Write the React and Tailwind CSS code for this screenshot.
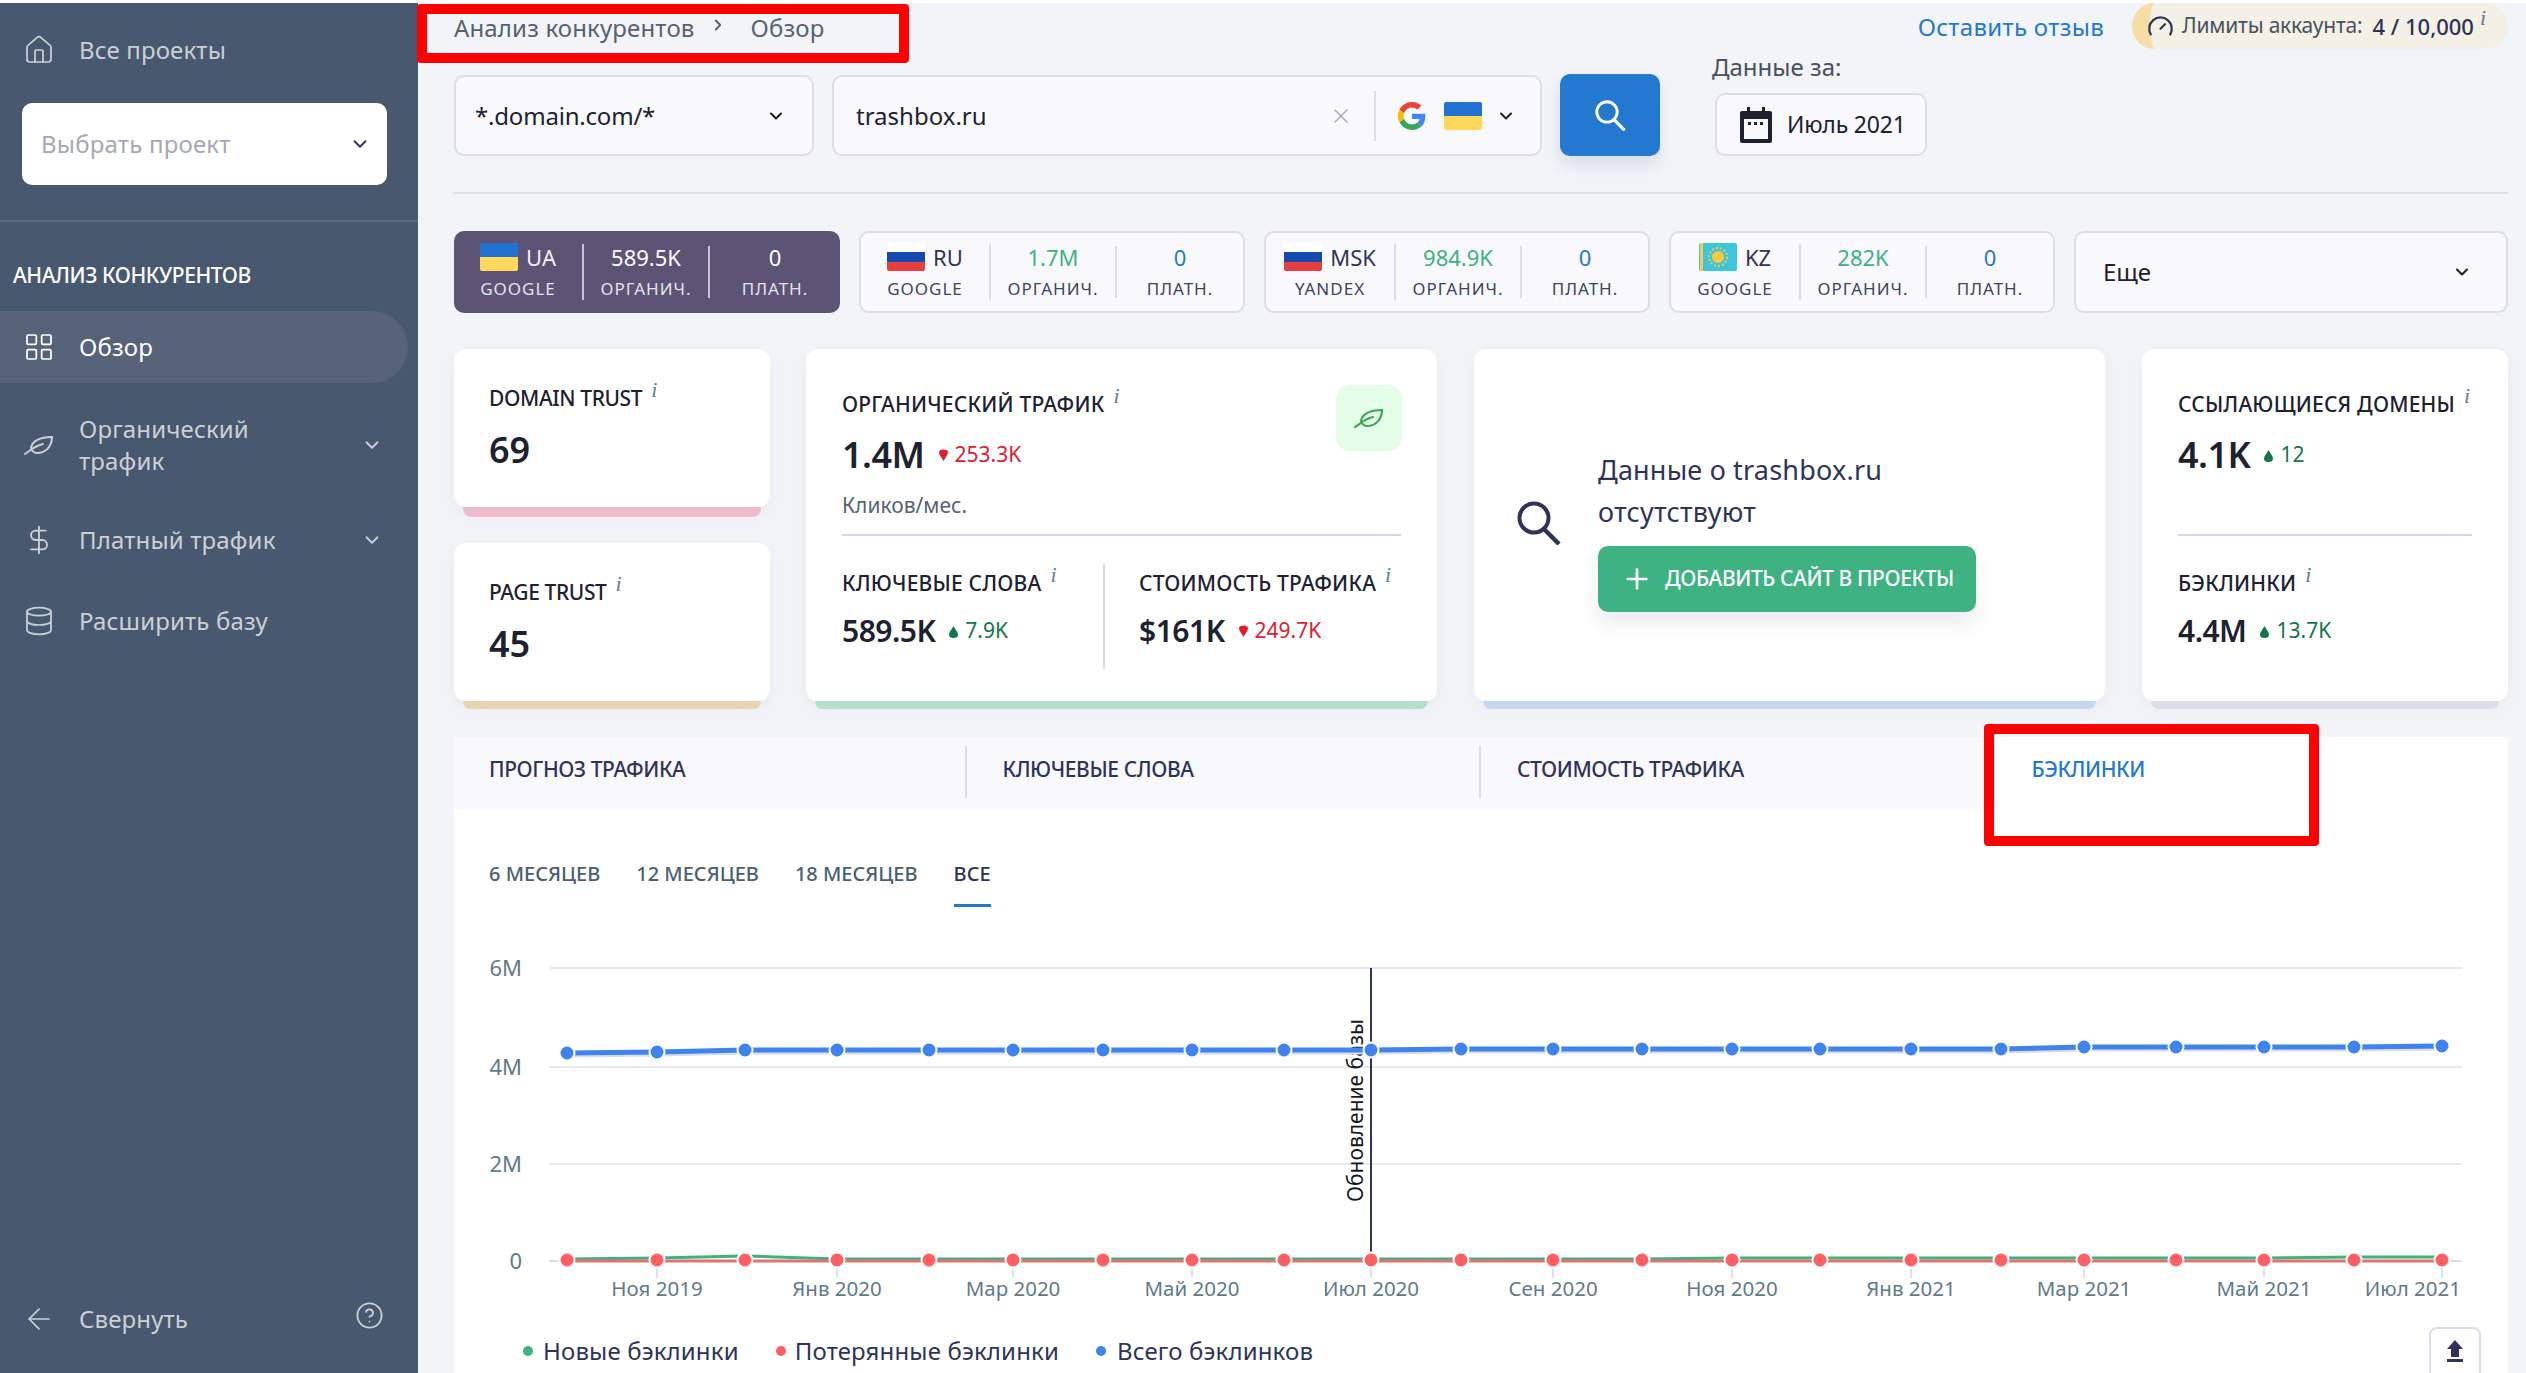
import React from 'react';
import { Home, LayoutGrid, DollarSign, Database, ChevronDown, ChevronRight, ArrowLeft, CircleHelp, X, Plus, Gauge } from 'lucide-react';

const COUNTRIES = [
  { code: 'UA', engine: 'GOOGLE', org: '589.5K', paid: '0', flag: 'ua', active: true },
  { code: 'RU', engine: 'GOOGLE', org: '1.7M', paid: '0', flag: 'ru' },
  { code: 'MSK', engine: 'YANDEX', org: '984.9K', paid: '0', flag: 'ru' },
  { code: 'KZ', engine: 'GOOGLE', org: '282K', paid: '0', flag: 'kz' },
];

const POINT_X = [567, 657, 745, 837, 929, 1013, 1103, 1192, 1284, 1371, 1461, 1553, 1642, 1732, 1820, 1911, 2001, 2084, 2176, 2264, 2354, 2442];
const TOTAL_Y = [1053, 1052, 1050, 1050, 1050, 1050, 1050, 1050, 1050, 1050, 1049, 1049, 1049, 1049, 1049, 1049, 1049, 1047, 1047, 1047, 1047, 1046];
const NEW_Y = [1260, 1259, 1257, 1260, 1260, 1260, 1260, 1260, 1260, 1260, 1260, 1260, 1260, 1259, 1259, 1259, 1259, 1259, 1259, 1259, 1258, 1258];
const X_LABELS = [
  ['Ноя 2019', 657], ['Янв 2020', 837], ['Мар 2020', 1013], ['Май 2020', 1192], ['Июл 2020', 1371], ['Сен 2020', 1553],
  ['Ноя 2020', 1732], ['Янв 2021', 1911], ['Мар 2021', 2084], ['Май 2021', 2264], ['Июл 2021', 2442],
];
const Y_LABELS = [['6M', 968], ['4M', 1067], ['2M', 1164], ['0', 1261]];

const toPoints = (ys, dy = 0) => POINT_X.map((x, i) => `${x},${ys[i] + dy}`).join(' ');

const Flag = ({ type }) => {
  if (type === 'ua') {
    return (
      <div className="w-[38px] h-[28px] rounded-[2px] overflow-hidden flex flex-col shrink-0">
        <div className="flex-1 bg-[#2273d1]" />
        <div className="flex-1 bg-[#ffd75a]" />
      </div>
    );
  }
  if (type === 'ru') {
    return (
      <div className="w-[38px] h-[28px] rounded-[2px] overflow-hidden flex flex-col shrink-0">
        <div className="flex-1 bg-white" />
        <div className="flex-1 bg-[#1549b0]" />
        <div className="flex-1 bg-[#e5403f]" />
      </div>
    );
  }
  return (
    <svg width="38" height="28" viewBox="0 0 38 28" className="shrink-0 rounded-[2px]">
      <rect width="38" height="28" fill="#3cc5dc" />
      <rect x="1" width="3" height="28" fill="#f3cd55" />
      <circle cx="19" cy="14" r="6" fill="#f7c93e" />
      <circle cx="19" cy="14" r="9" fill="none" stroke="#f7c93e" strokeWidth="2" strokeDasharray="2 2" />
    </svg>
  );
};

// лист в сайдбаре и в карточке трафика
const LeafIcon = ({ className = '', strokeWidth = 2 }) => (
  <svg width="30" height="20" viewBox="0 0 30 20" fill="none" stroke="currentColor" strokeWidth={strokeWidth} strokeLinecap="round" className={`shrink-0 ${className}`}>
    <path d="M7 13 C8 6 16 2 28 2 C28 11 22 18 13 18 C10 18 8 16 7 13" />
    <path d="M1 19 C6 16 10 11 19 9" />
  </svg>
);

const SearchGlyph = ({ size, color }) => (
  <svg width={size} height={size} viewBox="0 0 44 44" fill="none" stroke={color} className="shrink-0">
    <circle cx="17" cy="17" r="14.500" strokeWidth="4" />
    <path d="M27 28 L42 43" strokeWidth="4.500" />
  </svg>
);

const Info = () => (
  <span className="relative -top-[9px] ml-[9px] font-['Liberation_Serif',serif] italic text-[22px] font-normal text-[#5f7f8f]">i</span>
);

const Delta = ({ value, up }) => (
  <span className={`flex items-center gap-[6px] text-[21px] ${up ? 'text-[#14744b]' : 'text-[#e0202f]'}`}>
    <svg width="11" height="13" viewBox="0 0 11 13" fill="currentColor">
      {up
        ? <path d="M5.500 1 C7 4 10 7 10 9.500 A4.500 3.500 0 0 1 1 9.500 C1 7 4 4 5.500 1 Z" />
        : <path d="M5.500 12 C4 9 1 6 1 3.500 A4.500 3 0 0 1 10 3.500 C10 6 7 9 5.500 12 Z" />}
    </svg>
    {value}
  </span>
);

const Label = ({ children, className = 'tracking-[0.2px]' }) => (
  <div className={`text-[21px] leading-[28px] font-medium text-[#1d2130] whitespace-nowrap ${className}`}>{children}<Info /></div>
);

const NavItem = ({ icon, children, arrow, active, className = '' }) => (
  <div className={`flex items-center pl-[26px] pr-[35px] ${active ? 'bg-[#566379] text-white rounded-r-full mr-[10px]' : 'text-[#ccd0d6]'} ${className}`}>
    <span className="w-[26px] flex justify-center shrink-0">{icon}</span>
    <span className="ml-[27px] text-[24px] leading-[32px] tracking-[0.15px] flex-1">{children}</span>
    {arrow && <ChevronDown size={22} strokeWidth={2} />}
  </div>
);

const Sidebar = () => (
  <aside className="w-[418px] shrink-0 bg-[#47586f] flex flex-col h-full">
    <NavItem icon={<Home size={32} strokeWidth={1.3} className="shrink-0" />} className="mt-[31px]">Все проекты</NavItem>
    <div className="ml-[22px] mr-[31px] mt-[37px] h-[82px] bg-white rounded-[10px] flex items-center justify-between pl-[19px] pr-[16px]">
      <span className="text-[24px] text-[#a4a8b5] tracking-[0.2px]">Выбрать проект</span>
      <ChevronDown size={22} strokeWidth={2} className="text-[#2e3458]" />
    </div>
    <div className="h-[2px] bg-[#5b6b81] mt-[35px]" />
    <div className="pl-[13px] mt-[39px] text-[21px] leading-[28px] font-medium text-white tracking-[-0.4px]">АНАЛИЗ КОНКУРЕНТОВ</div>
    <NavItem icon={<LayoutGrid size={32} strokeWidth={1.3} className="shrink-0" />} active className="h-[72px] mt-[22px]">Обзор</NavItem>
    <NavItem icon={<LeafIcon />} arrow className="mt-[30px]">Органический<br />трафик</NavItem>
    <NavItem icon={<DollarSign size={32} strokeWidth={1.4} className="shrink-0" />} arrow className="mt-[47px]">Платный трафик</NavItem>
    <NavItem icon={<Database size={32} strokeWidth={1.3} className="shrink-0" />} className="mt-[49px]">Расширить базу</NavItem>
    <div className="mt-auto mb-[37px] flex items-center pl-[22px] pr-[34px] text-[#ccd0d6]">
      <ArrowLeft size={34} strokeWidth={1.2} className="shrink-0" />
      <span className="ml-[23px] text-[24px] leading-[32px] tracking-[0.15px] flex-1">Свернуть</span>
      <CircleHelp size={29} strokeWidth={1.5} className="-mt-[8px]" />
    </div>
  </aside>
);

const GoogleG = () => (
  <svg width="28" height="28" viewBox="0 0 48 48">
    <path fill="#EA4335" d="M24 9.500c3.500 0 6.700 1.200 9.200 3.600l6.900-6.900C35.900 2.400 30.500 0 24 0 14.600 0 6.500 5.400 2.600 13.200l8 6.200C12.500 13.600 17.800 9.500 24 9.500z" />
    <path fill="#4285F4" d="M47 24.500c0-1.600-.1-3.100-.4-4.500H24v9h12.900c-.6 3-2.200 5.500-4.800 7.200l7.700 6C44.300 38.600 47 32.100 47 24.500z" />
    <path fill="#FBBC05" d="M10.500 28.600A14.500 14.500 0 0 1 10.500 19.400l-8-6.200a24 24 0 0 0 0 21.600z" />
    <path fill="#34A853" d="M24 48c6.500 0 11.900-2.100 15.900-5.800l-7.700-6c-2.200 1.500-4.900 2.300-8.200 2.300-6.200 0-11.500-4.200-13.400-9.800l-8 6.200C6.500 42.600 14.600 48 24 48z" />
  </svg>
);

const CountryCard = ({ item }) => {
  const a = item.active;
  const line = a ? 'bg-[#c8c4d4]' : 'bg-[#dcdde8]';
  const sub = `text-[17px] leading-[20px] tracking-[1px] ${a ? 'text-[#e4e2ea]' : 'text-[#3d4362]'}`;
  return (
    <div className={`w-[386px] h-[82px] rounded-[10px] flex items-center ${a ? 'bg-[#5c5375]' : 'bg-[#f9f9fd] border-2 border-[#dcdde8]'}`}>
      <div className="w-[128px] h-full flex flex-col items-center justify-center">
        <div className="flex items-center gap-[8px] h-[28px] -mt-[2px]">
          <Flag type={item.flag} />
          <span className={`text-[22px] ${a ? 'text-[#f2f1f5]' : 'text-[#2e3458]'}`}>{item.code}</span>
        </div>
        <div className={`${sub} mt-[8px]`}>{item.engine}</div>
      </div>
      <div className={`w-[2px] h-[56px] ${line}`} />
      <div className="w-[124px] flex flex-col items-center -mt-[3px]">
        <div className={`text-[22px] leading-[28px] ${a ? 'text-white' : 'text-[#3cb27f]'}`}>{item.org}</div>
        <div className={`${sub} mt-[8px]`}>ОРГАНИЧ.</div>
      </div>
      <div className={`w-[2px] h-[52px] ${line}`} />
      <div className="flex-1 flex flex-col items-center -mt-[3px]">
        <div className={`text-[22px] leading-[28px] ${a ? 'text-white' : 'text-[#2378d0]'}`}>{item.paid}</div>
        <div className={`${sub} mt-[8px]`}>ПЛАТН.</div>
      </div>
    </div>
  );
};

const MetricCard = ({ strip, stripH = 'h-[8px]', cardH, width, children }) => (
  <div className={width}>
    <div className={`${cardH} bg-white rounded-[12px] shadow-[0_6px_20px_rgba(60,70,110,0.06)] relative z-10`}>{children}</div>
    <div className={`mx-[9px] ${stripH} rounded-b-[8px] ${strip}`} />
  </div>
);

const Chart = () => (
  <svg width="2054" height="370" viewBox="454 940 2054 370" className="block">
    {Y_LABELS.map(([t, y]) => (
      <g key={t}>
        <text x="522" y={y + 8} textAnchor="end" fontSize="22" fill="#5f7a8a">{t}</text>
        <line x1="549" x2="2462" y1={y} y2={y} stroke={t === '0' ? '#dcdde8' : '#e9e9ec'} strokeWidth="2" />
      </g>
    ))}
    {X_LABELS.map(([t, x], i) => (
      <g key={t}>
        <line x1={x} x2={x} y1="1268" y2="1278" stroke="#d5dbe6" strokeWidth="1.500" />
        <text x={i === 10 ? 2461 : x} y="1296" textAnchor={i === 10 ? 'end' : 'middle'} fontSize="20.500" fill="#5f7a8a">{t}</text>
      </g>
    ))}
    <line x1="1371" x2="1371" y1="968" y2="1261" stroke="#2e3458" strokeWidth="2" />
    <text transform="translate(1363 1202) rotate(-90)" fontSize="21" fill="#15171f">Обновление базы</text>
    <polyline points={toPoints(TOTAL_Y, 2)} fill="none" stroke="#dcdcdf" strokeWidth="5" />
    <polyline points={toPoints(TOTAL_Y)} fill="none" stroke="#3f83f0" strokeWidth="5" />
    <polyline points={toPoints(NEW_Y, -1)} fill="none" stroke="#3cb27f" strokeWidth="3" />
    <line x1="567" x2="2442" y1="1261" y2="1261" stroke="#e4716a" strokeWidth="3" />
    {POINT_X.map((x, i) => (
      <g key={x}>
        <circle cx={x} cy={TOTAL_Y[i]} r="7.500" fill="#3f83f0" stroke="#fff" strokeWidth="2" />
        <circle cx={x} cy="1260" r="7.500" fill="#ff5f63" stroke="#fff" strokeWidth="2" />
      </g>
    ))}
  </svg>
);

export default function App() {
  return (
    <div className="relative w-[2526px] h-[1373px] overflow-hidden bg-white pt-[3px] font-['Noto_Sans',sans-serif]">
      <div className="flex h-full bg-[#f2f4f8]">
        <Sidebar />
        <main className="flex-1 min-w-0 pl-[36px] pr-[18px]">
          {/* шапка */}
          <div className="flex justify-between h-[52px]">
            <div className="flex items-center text-[24px] text-[#56636f] tracking-[0.15px] pb-[3px]">
              <span>Анализ конкурентов</span>
              <ChevronRight size={18} strokeWidth={2.5} className="ml-[14px] mr-[24px] -mt-[6px]" />
              <span>Обзор</span>
            </div>
            <div className="flex items-start">
              <span className="text-[24px] leading-[48px] text-[#2378d0] tracking-[0.3px] mr-[28px]">Оставить отзыв</span>
              <div className="h-[46px] w-[376px] rounded-r-full rounded-l-full bg-[#f4f0e6] border-l-[18px] border-[#f7dda4] flex items-center text-[21px] whitespace-nowrap">
                <Gauge size={27} strokeWidth={2} className="text-[#2e3458] shrink-0 -ml-[3px]" />
                <span className="ml-[8px] text-[#47525e] tracking-[-0.2px]">Лимиты аккаунта:</span>
                <span className="ml-[10px] text-[22px] text-[#2e3458] font-medium">4 / 10,000</span>
                <span className="-ml-[3px]"><Info /></span>
              </div>
            </div>
          </div>

          {/* строка поиска */}
          <div className="flex items-end h-[101px]">
            <div className="w-[360px] h-[81px] rounded-[10px] bg-[#f9f9fd] border-2 border-[#dcdde8] flex items-center justify-between pl-[19px] pr-[26px]">
              <span className="text-[24px] text-[#1d2130] tracking-[-0.2px]">*.domain.com/*</span>
              <ChevronDown size={20} strokeWidth={2.5} className="text-[#1d2130]" />
            </div>
            <div className="w-[710px] ml-[18px] h-[81px] rounded-[10px] bg-[#f9f9fd] border-2 border-[#dcdde8] flex items-center pl-[22px] pr-[24px]">
              <span className="text-[24px] text-[#1d2130] flex-1">trashbox.ru</span>
              <X size={24} strokeWidth={1.5} className="text-[#a9abb8]" />
              <div className="w-[2px] h-[50px] bg-[#dcdde8] ml-[21px] mr-[22px]" />
              <GoogleG />
              <div className="ml-[18px]"><Flag type="ua" /></div>
              <ChevronDown size={20} strokeWidth={2.5} className="ml-[14px] text-[#1d2130]" />
            </div>
            <button className="w-[100px] h-[82px] ml-[18px] rounded-[10px] bg-[#2378d0] flex items-center justify-center shadow-[0_10px_18px_rgba(40,70,120,0.12)]">
              <SearchGlyph size={31} color="#ffffff" />
            </button>
            <div className="ml-[55px] flex flex-col">
              <div className="text-[24px] leading-[30px] text-[#47525e] -ml-[3px]">Данные за:</div>
              <div className="mt-[11px] w-[212px] h-[63px] rounded-[10px] bg-[#f9f9fd] border-2 border-[#dcdde8] flex items-center pl-[22px]">
                <svg width="34" height="38" viewBox="0 0 34 38">
                  <path d="M3 5h5V1h3v4h12V1h3v4h5a2 2 0 0 1 2 2v28a2 2 0 0 1-2 2H3a2 2 0 0 1-2-2V7a2 2 0 0 1 2-2z" fill="#1d2130" />
                  <rect x="5" y="13" width="24" height="20" fill="#f9f9fd" />
                  <rect x="9" y="16" width="3" height="3" fill="#1d2130" />
                  <rect x="15" y="16" width="3" height="3" fill="#1d2130" />
                  <rect x="21" y="16" width="3" height="3" fill="#1d2130" />
                </svg>
                <span className="ml-[14px] text-[23px] text-[#1d2130] tracking-[-0.2px]">Июль 2021</span>
              </div>
            </div>
          </div>

          <div className="h-[2px] bg-[#dcdde8] mt-[36px]" />

          {/* страны */}
          <div className="flex gap-[19px] mt-[37px]">
            {COUNTRIES.map((c) => <CountryCard key={c.code + c.engine} item={c} />)}
            <div className="flex-1 h-[82px] rounded-[10px] bg-[#f9f9fd] border-2 border-[#dcdde8] flex items-center justify-between pl-[27px] pr-[34px]">
              <span className="text-[24px] text-[#1d2130]">Еще</span>
              <ChevronDown size={20} strokeWidth={2.5} className="text-[#1d2130]" />
            </div>
          </div>

          {/* метрики */}
          <div className="flex mt-[36px] gap-[36px] h-[360px]">
            <div className="w-[316px] flex flex-col gap-[26px]">
              <MetricCard strip="bg-[#f5c0d0]" stripH="h-[10px]" cardH="h-[158px]">
                <div className="pl-[35px] pt-[35px]">
                  <Label className="tracking-[-0.4px]">DOMAIN TRUST</Label>
                  <div className="text-[36px] leading-[50px] font-semibold text-[#1d2130] mt-[12px]">69</div>
                </div>
              </MetricCard>
              <MetricCard strip="bg-[#ecdab3]" cardH="h-[158px]">
                <div className="pl-[35px] pt-[35px]">
                  <Label className="tracking-[-0.4px]">PAGE TRUST</Label>
                  <div className="text-[36px] leading-[50px] font-semibold text-[#1d2130] mt-[12px]">45</div>
                </div>
              </MetricCard>
            </div>

            <MetricCard width="w-[631px]" strip="bg-[#bbe3cf]" cardH="h-[352px]">
              <div className="px-[36px] pt-[41px] relative">
                <Label>ОРГАНИЧЕСКИЙ ТРАФИК</Label>
                <div className="absolute right-[35px] top-[36px] w-[66px] h-[66px] rounded-[14px] bg-[#e3fde9] flex items-center justify-center">
                  <LeafIcon className="text-[#3fa655]" strokeWidth={2.2} />
                </div>
                <div className="flex items-center gap-[13px] mt-[11px]">
                  <span className="text-[36px] leading-[50px] font-semibold text-[#1d2130] tracking-[-0.5px]">1.4M</span>
                  <Delta value="253.3K" />
                </div>
                <div className="text-[21px] leading-[28px] text-[#56636f] mt-[11px]">Кликов/мес.</div>
                <div className="h-[2px] bg-[#d5d8e6] mt-[15px]" />
                <div className="flex mt-[28px]">
                  <div className="w-[263px] h-[105px] border-r-2 border-[#d5d8e6] pt-[5px]">
                    <Label>КЛЮЧЕВЫЕ СЛОВА</Label>
                    <div className="flex items-center gap-[13px] mt-[12px]">
                      <span className="text-[30px] leading-[42px] font-semibold text-[#1d2130] tracking-[-0.5px]">589.5K</span>
                      <Delta value="7.9K" up />
                    </div>
                  </div>
                  <div className="pl-[34px] pt-[5px]">
                    <Label>СТОИМОСТЬ ТРАФИКА</Label>
                    <div className="flex items-center gap-[13px] mt-[12px]">
                      <span className="text-[30px] leading-[42px] font-semibold text-[#1d2130] tracking-[-0.5px]">$161K</span>
                      <Delta value="249.7K" />
                    </div>
                  </div>
                </div>
              </div>
            </MetricCard>

            <MetricCard width="w-[631px] ml-[1px]" strip="bg-[#c9dcf5]" cardH="h-[352px]">
              <div className="flex items-center h-full pl-[43px] pb-[4px]">
                <SearchGlyph size={44} color="#2e3458" />
                <div className="ml-[37px] pt-[15px]">
                  <div className="text-[27px] leading-[42px] text-[#2e3458] tracking-[0.2px]">Данные о trashbox.ru<br />отсутствуют</div>
                  <div className="mt-[13px] w-[378px] h-[66px] rounded-[10px] bg-[#3fb282] flex items-center pl-[23px] text-white shadow-[0_12px_20px_rgba(60,70,90,0.1)]">
                    <Plus size={32} strokeWidth={2} />
                    <span className="ml-[12px] text-[21px] font-medium tracking-[-0.4px] whitespace-nowrap">ДОБАВИТЬ САЙТ В ПРОЕКТЫ</span>
                  </div>
                </div>
              </div>
            </MetricCard>

            <MetricCard width="flex-1 ml-[1px]" strip="bg-[#e2e3ec]" cardH="h-[352px]">
              <div className="px-[36px] pt-[41px]">
                <Label>ССЫЛАЮЩИЕСЯ ДОМЕНЫ</Label>
                <div className="flex items-center gap-[13px] mt-[11px]">
                  <span className="text-[36px] leading-[50px] font-semibold text-[#1d2130] tracking-[-0.5px]">4.1K</span>
                  <Delta value="12" up />
                </div>
                <div className="h-[2px] bg-[#d5d8e6] mt-[54px]" />
                <div className="mt-[33px]"><Label>БЭКЛИНКИ</Label></div>
                <div className="flex items-center gap-[13px] mt-[12px]">
                  <span className="text-[30px] leading-[42px] font-semibold text-[#1d2130] tracking-[-0.5px]">4.4M</span>
                  <Delta value="13.7K" up />
                </div>
              </div>
            </MetricCard>
          </div>

          {/* вкладки */}
          <div className="grid grid-cols-4 h-[72px] bg-[#f9f9fd] mt-[28px] text-[21px] font-medium tracking-[-0.4px] text-[#2e3458]">
            <div className="flex items-center pl-[35px]"><span className="-mt-[6px]">ПРОГНОЗ ТРАФИКА</span></div>
            <div className="flex items-center"><div className="w-[2px] h-[52px] bg-[#dcdde8] -ml-[3px] -mt-[3px] mr-[36px]" /><span className="-mt-[6px]">КЛЮЧЕВЫЕ СЛОВА</span></div>
            <div className="flex items-center"><div className="w-[2px] h-[52px] bg-[#dcdde8] -ml-[2px] -mt-[3px] mr-[36px]" /><span className="-mt-[6px]">СТОИМОСТЬ ТРАФИКА</span></div>
            <div className="flex items-center pl-[37px] bg-white text-[#2378d0]"><span className="-mt-[6px]">БЭКЛИНКИ</span></div>
          </div>

          {/* график */}
          <section className="bg-white h-[600px]">
            <div className="flex gap-[36px] pl-[35px] pt-[51px] text-[20px] leading-[28px] font-medium text-[#4a6070]">
              <span>6 МЕСЯЦЕВ</span>
              <span>12 МЕСЯЦЕВ</span>
              <span>18 МЕСЯЦЕВ</span>
              <span className="text-[#2e3458] pb-[16px] border-b-[3px] border-[#2378d0]">ВСЕ</span>
            </div>
            <div className="mt-[33px]"><Chart /></div>
            <div className="flex justify-between items-start pl-[69px] pr-[27px] mt-[17px] text-[24px] tracking-[0.15px] text-[#2e3458]">
              <div className="flex items-center h-[47px]">
                <span className="w-[10px] h-[10px] rounded-full bg-[#3cb27f]" />
                <span className="ml-[10px]">Новые бэклинки</span>
                <span className="w-[10px] h-[10px] rounded-full bg-[#ff5f63] ml-[37px]" />
                <span className="ml-[9px]">Потерянные бэклинки</span>
                <span className="w-[10px] h-[10px] rounded-full bg-[#3f83f0] ml-[37px]" />
                <span className="ml-[11px]">Всего бэклинков</span>
              </div>
              <div className="w-[52px] h-[60px] rounded-[8px] border-2 border-[#dcdde8] bg-white flex justify-center pt-[11px]">
                <svg width="18" height="22" viewBox="0 0 18 22" fill="#2e3458">
                  <path d="M9 0 L17 9 H13 V17 H5 V9 H1 Z" />
                  <rect x="1" y="19" width="16" height="3" />
                </svg>
              </div>
            </div>
          </section>
        </main>
      </div>

      {/* красные выделения на скриншоте */}
      <div className="absolute left-[417px] top-[4px] w-[492px] h-[59px] border-[10px] border-[#ff0000] rounded-[4px]" />
      <div className="absolute left-[1984px] top-[724px] w-[335px] h-[122px] border-[10px] border-[#ff0000] rounded-[4px]" />
    </div>
  );
}
